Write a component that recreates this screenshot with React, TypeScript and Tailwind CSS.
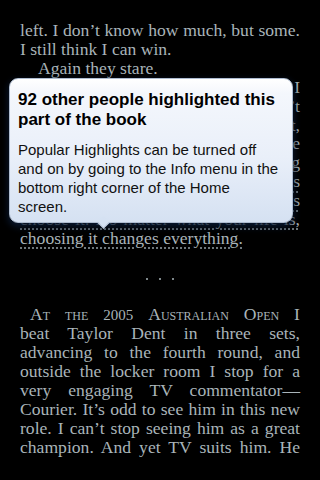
import React from 'react';

const serif = "font-['Liberation_Serif','Times_New_Roman',serif]";
const just = 'text-justify [text-align-last:justify]';
const under = 'underline decoration-dotted decoration-[#7d888e] underline-offset-[4px]';

export default function App() {
  return (
    <div className="relative w-[320px] h-[480px] overflow-hidden bg-black">
      {/* Book page */}
      <div className={`${serif} pt-[21px] px-5 text-[17.6px] leading-[18.9px] text-[#a9b4b9]`}>
        <div className={just}>left. I don’t know how much, but some.</div>
        <div>I still think I can win.</div>
        <div className="pl-[18px]">Again they stare.</div>
        <div className={`${just} pl-[18px]`}>They want to know why, and so I</div>
        <div className={just}>say that I am tired but I can’t</div>
        <div className={just}>quit, that I won’t quit, not yet,</div>
        <div className={just}>because the only thing I’m sure</div>
        <div className={just}>of is that I love the thing</div>
        <div className={just}><span className={under}>because I choose to. Even if it’s</span></div>
        <div className={just}><span className={under}>not your ideal life, you can always</span></div>
        <div className={just}><span className={under}>choose it. No matter what your life is,</span></div>
        <div><span className={under}>choosing it changes everything.</span></div>
        <div className="h-[18.9px]" />
        <div className="flex h-[18.9px] items-center justify-center gap-[11px] pt-[6px]">
          <span className="h-[2px] w-[2px] rounded-full bg-[#a9b4b9]" />
          <span className="h-[2px] w-[2px] rounded-full bg-[#a9b4b9]" />
          <span className="h-[2px] w-[2px] rounded-full bg-[#a9b4b9]" />
        </div>
        <div className="h-[18.9px]" />
        <div className={`${just} pl-[10px]`}>
          <span className="[font-variant:small-caps]">At the</span>{' '}
          <span className="text-[15px]">2005</span>{' '}
          <span className="[font-variant:small-caps]">Australian Open</span> I
        </div>
        <div className={just}>beat Taylor Dent in three sets,</div>
        <div className={just}>advancing to the fourth round, and</div>
        <div className={just}>outside the locker room I stop for a</div>
        <div className={just}>very engaging TV commentator— </div>
        <div className={just}>Courier. It’s odd to see him in this new</div>
        <div className={just}>role. I can’t stop seeing him as a great</div>
        <div className={just}>champion. And yet TV suits him. He</div>
      </div>

      {/* Popular highlights popover */}
      <div className="absolute left-[9px] top-[78px] h-[145px] w-[284px] rounded-[9px] border border-[#aebcd0] bg-[linear-gradient(to_bottom,#ffffff_0%,#f4f7fc_10%,#e9eff9_55%,#d5e1f2_100%)] pl-[8px] pr-[4px] pt-[11px] shadow-[0_3px_7px_1px_rgba(10,24,48,0.95)] font-['Liberation_Sans',Arial,sans-serif]">
        <div className="text-[17px] font-bold leading-[20px] text-black">
          92 other people highlighted this
          <br />
          part of the book
        </div>
        <div className="mt-[10px] text-[15px] leading-[19px] text-[#111]">
          Popular Highlights can be turned off
          <br />
          and on by going to the Info menu in the
          <br />
          bottom right corner of the Home
          <br />
          screen.
        </div>
        <div className="absolute bottom-[-5px] left-[89px] h-[9px] w-[9px] rotate-45 border-b border-r border-[#aebcd0] bg-[#d5e1f2]" />
      </div>
    </div>
  );
}
